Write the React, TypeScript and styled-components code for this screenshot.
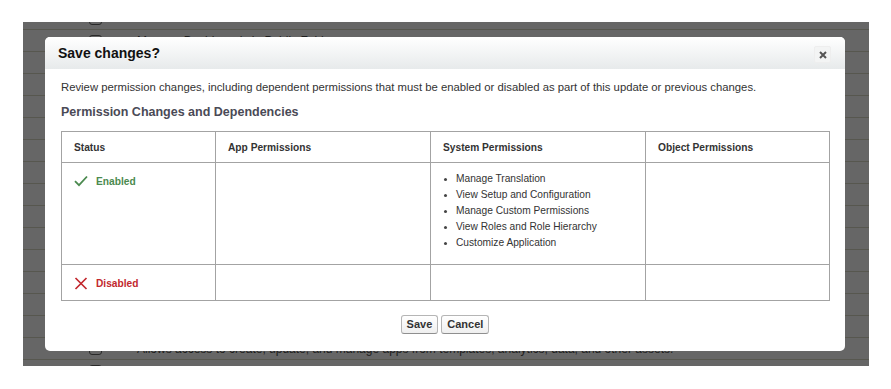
import React from "react";
import styled, { createGlobalStyle } from "styled-components";

const GlobalStyle = createGlobalStyle`
  html, body {
    margin: 0;
    padding: 0;
    background: #ffffff;
  }
  body {
    font-family: "Liberation Sans", Arial, sans-serif;
    color: #333;
  }
`;

const Page = styled.div`
  width: 891px;
  height: 389px;
  padding: 22px 0 0 23px;
  box-sizing: border-box;
`;

// The dimmed setup page that sits behind the modal
const Backdrop = styled.div`
  position: relative;
  width: 846px;
  height: 344px;
  background: #666666;
  overflow: hidden;
`;

const BackRows = styled.div`
  display: flex;
  flex-direction: column;
  margin-top: -14px;
`;

const BackRow = styled.div`
  height: 21px;
  flex: none;
  border-bottom: 1px solid #57574f;
  display: flex;
  align-items: center;
  gap: 35px;
  padding-left: 66px;
`;

const BackCheck = styled.span`
  width: 11px;
  height: 10px;
  border: 1px solid #2a2a2a;
  border-radius: 3px;
  flex: none;
`;

const BackText = styled.span`
  font-size: 12px;
  color: #1e1e1e;
  white-space: nowrap;
`;

const Dialog = styled.div`
  position: absolute;
  left: 22px;
  top: 15px;
  width: 800px;
  height: 314px;
  background: #ffffff;
  border-radius: 5px;
  overflow: hidden;
  display: flex;
  flex-direction: column;
`;

const Header = styled.div`
  height: 32px;
  flex: none;
  display: flex;
  align-items: center;
  justify-content: space-between;
  padding: 0 14px 0 13px;
  background: linear-gradient(#ffffff, #e7eaeb);
`;

const Title = styled.h2`
  margin: 0;
  font-size: 14px;
  font-weight: bold;
  color: #111;
`;

const CloseButton = styled.button`
  width: 17px;
  height: 17px;
  padding: 0;
  margin-top: 3px;
  border: 1px solid #eeeeee;
  border-radius: 2px;
  background: #f3f4f4;
  display: flex;
  align-items: center;
  justify-content: center;
  cursor: pointer;
`;

const Body = styled.div`
  flex: 1;
  display: flex;
  flex-direction: column;
  padding: 11px 16px 0;
`;

const Intro = styled.p`
  margin: 0;
  font-size: 11.3px;
  line-height: 14px;
  color: #333;
`;

const SubTitle = styled.h3`
  margin: 10px 0 0;
  font-size: 12.5px;
  line-height: 16px;
  font-weight: bold;
  color: #4a4a56;
`;

const Table = styled.table`
  margin-top: 11px;
  width: 768px;
  border-collapse: collapse;
  table-layout: fixed;
  font-size: 10.2px;
`;

const Th = styled.th<{ $w: number }>`
  width: ${(p) => p.$w}px;
  height: 31px;
  padding: 0 12px;
  text-align: left;
  font-weight: bold;
  color: #333;
  border: 1px solid #a3a3a3;
  box-sizing: border-box;
`;

const Td = styled.td<{ $h: number }>`
  height: ${(p) => p.$h}px;
  padding: 0 12px;
  vertical-align: top;
  border: 1px solid #a3a3a3;
`;

const Status = styled.div<{ $on: boolean }>`
  display: flex;
  align-items: center;
  gap: 8px;
  height: 20px;
  margin-top: 8px;
  font-weight: bold;
  color: ${(p) => (p.$on ? "#4b8a4f" : "#c2282e")};
`;

const PermList = styled.ul`
  margin: 8px 0 0;
  padding: 0 0 0 13px;
  list-style: none;
`;

const PermItem = styled.li`
  position: relative;
  line-height: 16px;
  color: #333;
  &::before {
    content: "";
    position: absolute;
    left: -12px;
    top: 7px;
    width: 3px;
    height: 3px;
    border-radius: 50%;
    background: #444;
  }
`;

const Footer = styled.div`
  display: flex;
  align-items: flex-start;
  justify-content: center;
  gap: 3px;
  margin-top: 14px;
`;

const Button = styled.button`
  height: 19px;
  box-sizing: border-box;
  padding: 0 5px;
  font-family: "Liberation Sans", Arial, sans-serif;
  font-size: 11px;
  line-height: 17px;
  font-weight: bold;
  color: #333;
  background: linear-gradient(#ffffff, #efefef);
  border: 1px solid #b5b5b5;
  border-bottom-color: #8f8f8f;
  border-radius: 3px;
  cursor: pointer;
`;

const CheckIcon = () => (
  <svg width="14" height="12" viewBox="0 0 14 12">
    <path d="M1 6.2 L5 10.2 L13 1.5" fill="none" stroke="#4b8a4f" strokeWidth="1.8" />
  </svg>
);

const CrossIcon = () => (
  <svg width="14" height="13" viewBox="0 0 14 13">
    <path d="M1.5 1 L12.5 12 M12.5 1 L1.5 12" fill="none" stroke="#c2282e" strokeWidth="1.7" />
  </svg>
);

const CloseIcon = () => (
  <svg width="8" height="8" viewBox="0 0 8 8">
    <path d="M1 1 L7 7 M7 1 L1 7" stroke="#555" strokeWidth="2" />
  </svg>
);

const backRows = [
  "",
  "Manage Dashboards in Public Folders",
  "", "", "", "", "", "", "", "", "", "", "", "", "",
  "Allows access to create, update, and manage apps from templates, analytics, data, and other assets.",
  "",
];

const systemPerms = [
  "Manage Translation",
  "View Setup and Configuration",
  "Manage Custom Permissions",
  "View Roles and Role Hierarchy",
  "Customize Application",
];

export default function App() {
  return (
    <>
      <GlobalStyle />
      <Page>
        <Backdrop>
          <BackRows>
            {backRows.map((t, i) => (
              <BackRow key={i}>
                <BackCheck />
                <BackText>{t}</BackText>
              </BackRow>
            ))}
          </BackRows>

          <Dialog>
            <Header>
              <Title>Save changes?</Title>
              <CloseButton aria-label="Close">
                <CloseIcon />
              </CloseButton>
            </Header>
            <Body>
              <Intro>
                Review permission changes, including dependent permissions that must be enabled or
                disabled as part of this update or previous changes.
              </Intro>
              <SubTitle>Permission Changes and Dependencies</SubTitle>
              <Table>
                <thead>
                  <tr>
                    <Th $w={154}>Status</Th>
                    <Th $w={215}>App Permissions</Th>
                    <Th $w={215}>System Permissions</Th>
                    <Th $w={184}>Object Permissions</Th>
                  </tr>
                </thead>
                <tbody>
                  <tr>
                    <Td $h={101}>
                      <Status $on>
                        <CheckIcon />
                        Enabled
                      </Status>
                    </Td>
                    <Td $h={101} />
                    <Td $h={101}>
                      <PermList>
                        {systemPerms.map((p) => (
                          <PermItem key={p}>{p}</PermItem>
                        ))}
                      </PermList>
                    </Td>
                    <Td $h={101} />
                  </tr>
                  <tr>
                    <Td $h={35}>
                      <Status $on={false}>
                        <CrossIcon />
                        Disabled
                      </Status>
                    </Td>
                    <Td $h={35} />
                    <Td $h={35} />
                    <Td $h={35} />
                  </tr>
                </tbody>
              </Table>
              <Footer>
                <Button>Save</Button>
                <Button>Cancel</Button>
              </Footer>
            </Body>
          </Dialog>
        </Backdrop>
      </Page>
    </>
  );
}
